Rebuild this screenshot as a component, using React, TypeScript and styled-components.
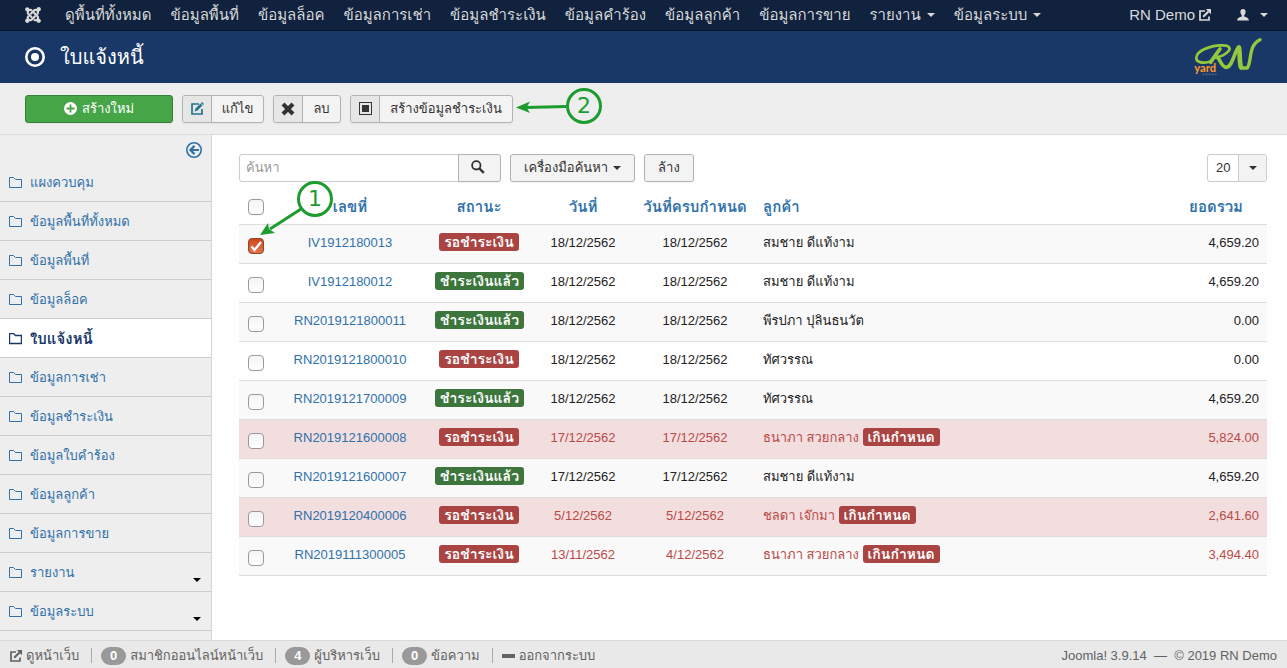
import React from 'react';
import styled, { createGlobalStyle, css } from 'styled-components';
import { FaJoomla } from 'react-icons/fa';

const GlobalStyle = createGlobalStyle`
  *, *::before, *::after { box-sizing: border-box; }
  html, body { margin: 0; padding: 0; }
  body {
    background: #fff;
    color: #333;
    font-family: "Liberation Sans", "Waree", "Loma", "Noto Sans Thai Looped", "Garuda", "Umpush", "Droid Sans Thai", "Noto Sans Thai", sans-serif;
    font-size: 13px;
    line-height: 18px;
  }
  a { color: #3071a9; text-decoration: none; }
  button, input, select { font: inherit; color: inherit; }
`;

const Page = styled.div`
  display: flex;
  flex-direction: column;
  height: 100vh;
  overflow: hidden;
  position: relative;
`;

const Navbar = styled.nav`
  display: flex;
  align-items: center;
  flex: none;
  height: 31px;
  padding: 0 19px 0 24px;
  background: #10223e;
  border-bottom: 1px solid #0b1629;
  color: #d9d9d9;
  font-size: 15px;
`;

const NavList = styled.div`
  display: flex;
  align-items: center;
  gap: 19px;
  flex: 1;
  margin-left: 23px;
`;

const NavLink = styled.a<{ $gap?: number }>`
  display: flex;
  align-items: center;
  gap: ${p => p.$gap || 6}px;
  color: #d9d9d9;
  white-space: nowrap;
`;

const NavEnd = styled.div`
  display: flex;
  align-items: center;
  gap: 26px;
`;

const Caret = styled.span`
  width: 0;
  height: 0;
  border: 4px solid transparent;
  border-top-color: currentColor;
  border-bottom: 0;
`;

const Header = styled.header`
  display: flex;
  align-items: center;
  flex: none;
  gap: 15px;
  height: 52px;
  padding: 0 25px;
  background: #1a3867;
  color: #fff;
`;

const Title = styled.h1`
  flex: 1;
  margin: 0;
  font-size: 20px;
  line-height: 32px;
  font-weight: 400;
`;

const Toolbar = styled.div`
  display: flex;
  align-items: center;
  flex: none;
  gap: 9px;
  height: 52px;
  padding: 0 25px;
  background: #eee;
  border-bottom: 1px solid #ddd;
`;

const buttonBase = css`
  display: inline-flex;
  align-items: center;
  justify-content: center;
  height: 28px;
  padding: 0;
  border: 1px solid #b3b3b3;
  border-radius: 3px;
  background: #f3f3f3;
  color: #333;
  white-space: nowrap;
  box-shadow: 0 1px 2px rgba(0, 0, 0, 0.05);
`;

const NewButton = styled.button`
  ${buttonBase}
  gap: 5px;
  width: 148px;
  background: #46a546;
  border-color: #378137;
  color: #fff;
`;

const ToolButton = styled.button<{ $width: number }>`
  ${buttonBase}
  width: ${p => p.$width}px;
  justify-content: flex-start;
`;

const ToolIcon = styled.span`
  display: flex;
  align-items: center;
  justify-content: center;
  flex: none;
  width: 29px;
  height: 26px;
  background: #e6e6e6;
  border-right: 1px solid #b3b3b3;
  border-radius: 3px 0 0 3px;
`;

const ToolLabel = styled.span`
  flex: 1;
  text-align: center;
`;

const Body = styled.div`
  display: flex;
  flex: 1;
  min-height: 0;
`;

const Sidebar = styled.aside`
  flex: none;
  width: 212px;
  overflow: hidden;
  background: #eee;
  border-right: 1px solid #d6d6d6;
`;

const CollapseRow = styled.div`
  display: flex;
  justify-content: flex-end;
  height: 28px;
  padding: 7px 9px 0;
`;

const CollapseButton = styled.button`
  display: flex;
  width: 16px;
  height: 16px;
  padding: 0;
  border: 0;
  background: none;
  color: #3071a9;
`;

const SideLink = styled.a<{ $active?: boolean }>`
  display: flex;
  align-items: center;
  gap: 8px;
  height: 39px;
  padding: 2px 10px 0 9px;
  border-bottom: 1px solid #ccc;
  background: ${p => (p.$active ? '#fff' : 'transparent')};
  color: ${p => (p.$active ? '#1a3867' : '#3071a9')};
  font-size: ${p => (p.$active ? 15 : 13)}px;
  font-weight: ${p => (p.$active ? 700 : 400)};
`;

const SideCaret = styled(Caret)`
  align-self: flex-end;
  margin: 0 0 9px auto;
  color: #000;
`;

const Content = styled.main`
  flex: 1;
  min-width: 0;
  padding: 18px 20px 0 27px;
  background: #fefefe;
`;

const FilterBar = styled.div`
  display: flex;
  align-items: center;
  gap: 9px;
  height: 29px;
`;

const SearchGroup = styled.div`
  display: flex;
`;

const SearchInput = styled.input`
  width: 220px;
  height: 28px;
  padding: 0 6px;
  border: 1px solid #ccc;
  border-radius: 3px 0 0 3px;
  background: #fff;
  &::placeholder { color: #999; opacity: 1; }
`;

const SearchButton = styled.button`
  ${buttonBase}
  width: 43px;
  margin-left: -1px;
  padding: 0 4px 2px 0;
  border-radius: 0 3px 3px 0;
`;

const FilterButton = styled.button`
  ${buttonBase}
  gap: 5px;
  padding: 0 13px;
`;

const LimitBox = styled.div`
  position: relative;
  display: flex;
  width: 60px;
  height: 28px;
  margin-left: auto;
  border: 1px solid #ccc;
  border-radius: 3px;
  background: #fff;
`;

const LimitSelect = styled.select`
  appearance: none;
  flex: 1;
  min-width: 0;
  padding: 0 0 0 8px;
  border: 0;
  background: none;
`;

const LimitArrow = styled.span`
  display: flex;
  align-items: center;
  justify-content: center;
  flex: none;
  width: 28px;
  border-left: 1px solid #ccc;
  border-radius: 0 3px 3px 0;
  background: #f3f3f3;
`;

const Table = styled.table`
  width: 100%;
  margin-top: 8px;
  border-collapse: collapse;
  table-layout: fixed;
`;

const Col = styled.col<{ $width?: number }>`
  width: ${p => (p.$width ? `${p.$width}px` : 'auto')};
`;

const Th = styled.th<{ $align?: string; $end?: boolean }>`
  height: 34px;
  padding: 0 ${p => (p.$end ? 24 : 8)}px 0 8px;
  text-align: ${p => p.$align || 'center'};
  font-size: 15px;
  font-weight: 700;
  white-space: nowrap;
`;

const Row = styled.tr<{ $tone: 'odd' | 'even' | 'late' }>`
  background: ${p => ({ odd: '#f9f9f9', even: '#fefefe', late: '#f2dede' })[p.$tone]};
  border-top: 1px solid #ddd;
  border-bottom: 1px solid #ddd;
`;

const Td = styled.td<{ $align?: string; $overdue?: boolean }>`
  height: 39px;
  padding: 8px;
  vertical-align: top;
  text-align: ${p => p.$align || 'center'};
  color: ${p => (p.$overdue ? '#b94a48' : '#222')};
  line-height: 20px;
  white-space: nowrap;
`;

const CheckTd = styled(Td)`
  padding: 12px 8px 0;
`;

const Check = styled.input`
  appearance: none;
  display: block;
  width: 16px;
  height: 16px;
  margin: 1px;
  border: 1px solid #999;
  border-radius: 4px;
  background: linear-gradient(#f4f4f4, #fff);
  &:checked {
    border-color: #8f4425;
    background:
      url("data:image/svg+xml,%3Csvg xmlns='http://www.w3.org/2000/svg' viewBox='0 0 14 14'%3E%3Cpath d='M2.5 7.5 5.5 11 12 3' fill='none' stroke='white' stroke-width='2.2'/%3E%3C/svg%3E"),
      linear-gradient(#cc4a1c, #e2764e);
  }
`;

const Badge = styled.span<{ $tone: 'green' | 'red' }>`
  display: inline-block;
  height: 18px;
  padding: 0 5px;
  border-radius: 3px;
  background: ${p => (p.$tone === 'green' ? '#3c763d' : '#a94442')};
  color: #fff;
  font-size: 14px;
  font-weight: 700;
  line-height: 18px;
  vertical-align: top;
`;

const Footer = styled.footer`
  display: flex;
  align-items: center;
  flex: none;
  height: 28px;
  padding: 2px 10px 0;
  background: #e9e9e9;
  border-top: 1px solid #d9d9d9;
  color: #626262;
`;

const FooterLink = styled.a`
  display: flex;
  align-items: center;
  gap: 4px;
  margin-right: 12px;
  color: #626262;
  white-space: nowrap;
  & + & {
    padding-left: 10px;
    background: linear-gradient(#aaa, #aaa) left center / 1px 15px no-repeat;
  }
`;

const Count = styled.span`
  width: 25px;
  height: 18px;
  border-radius: 9px;
  background: #999;
  color: #fff;
  font-weight: 700;
  text-align: center;
`;

const Copyright = styled.span`
  margin-left: auto;
  white-space: pre;
`;

const Marker = styled.div<{ $x: number; $y: number }>`
  position: absolute;
  left: ${p => p.$x}px;
  top: ${p => p.$y}px;
  display: flex;
  align-items: center;
  justify-content: center;
  width: 36px;
  height: 36px;
  border: 3px solid #1c9c2e;
  border-radius: 50%;
  color: #1c9c2e;
  font-family: "DejaVu Sans", sans-serif;
  font-size: 22px;
  line-height: 30px;
`;

const Arrow = styled.svg<{ $x: number; $y: number }>`
  position: absolute;
  left: ${p => p.$x}px;
  top: ${p => p.$y}px;
  pointer-events: none;
`;

const ExternalIcon = () => (
  <svg width="12" height="12" viewBox="0 0 12 12" fill="none" stroke="currentColor" strokeWidth="1.7">
    <path d="M6 2H1V11H10V7.5" />
    <path d="M4.2 7.8 9.5 2.5" strokeWidth="2" />
    <path d="M6.8 0H12V5.2Z" fill="currentColor" stroke="none" />
  </svg>
);

const UserIcon = () => (
  <svg width="12" height="12" viewBox="0 0 12 12" fill="currentColor">
    <path d="M6 0C7.8 0 8.6 1.2 8.6 2.8 8.6 4.3 8 5.6 7.2 6.2V7.6C9 8.2 11.8 9 11.8 11.4H.2C.2 9 3 8.2 4.8 7.6V6.2C4 5.6 3.4 4.3 3.4 2.8 3.4 1.2 4.2 0 6 0Z" />
  </svg>
);

const TargetIcon = () => (
  <svg width="20" height="20" viewBox="0 0 20 20">
    <circle cx="10" cy="10" r="8.7" fill="none" stroke="#fff" strokeWidth="2.6" />
    <circle cx="10" cy="10" r="4" fill="#fff" />
  </svg>
);

const Logo = () => (
  <svg width="68" height="40" viewBox="0 0 204 120" fill="none" stroke="#95c93d" strokeLinecap="round" strokeLinejoin="round">
    <path d="M46 74C26 80 5 76 7 61C9 42 46 26 82 25C106 24 112 34 102 44C92 54 76 60 64 61" strokeWidth="8" />
    <path d="M78 36C68 50 60 60 50 76" strokeWidth="11" />
    <path d="M70 61C80 68 82 92 98 91C116 87 120 46 134 30" strokeWidth="11" />
    <path d="M135 32C139 50 135 74 141 91" strokeWidth="14" />
    <path d="M142 93H160C174 74 162 24 198 8" strokeWidth="10" />
    <text x="1" y="105" fill="#f7942a" stroke="none" fontFamily="Lato, sans-serif" fontWeight="900" fontSize="33">yard</text>
    <path d="M28 112H70" stroke="#53627c" strokeWidth="5" strokeDasharray="2 7" />
  </svg>
);

const PlusIcon = () => (
  <svg width="13" height="13" viewBox="0 0 13 13">
    <circle cx="6.5" cy="6.5" r="6.5" fill="#fff" />
    <path d="M6.5 2.5V10.5M2.5 6.5H10.5" stroke="#46a546" strokeWidth="1.8" />
  </svg>
);

const EditIcon = () => (
  <svg width="13" height="13" viewBox="0 0 13 13" fill="none" stroke="#24748c" strokeWidth="1.7">
    <path d="M8 2H1V12H11V7" />
    <path d="M5 8 10.5 2.5" strokeWidth="2.6" />
    <path d="M3.6 9.4 4.2 6.9 6.1 8.8ZM10 1 11 0 13 2 12 3Z" fill="#24748c" stroke="none" />
  </svg>
);

const CrossIcon = () => (
  <svg width="14" height="14" viewBox="0 0 14 14" stroke="#333" strokeWidth="4">
    <path d="M2 2 12 12M12 2 2 12" />
  </svg>
);

const SquareIcon = () => (
  <svg width="13" height="13" viewBox="0 0 13 13">
    <rect x=".5" y=".5" width="12" height="12" fill="none" stroke="#333" />
    <rect x="3" y="3" width="7" height="7" fill="#333" />
  </svg>
);

const BackIcon = () => (
  <svg width="16" height="16" viewBox="0 0 16 16" fill="none" stroke="currentColor">
    <circle cx="8" cy="8" r="7.2" strokeWidth="1.6" />
    <path d="M4.2 8H13" strokeWidth="2" />
    <path d="M8.5 3.9 4.4 8 8.5 12.1" strokeWidth="2.2" />
  </svg>
);

const FolderIcon = ({ bold }: { bold?: boolean }) => (
  <svg width="13" height="12" viewBox="0 0 13 12" fill="none" stroke="currentColor" strokeWidth={bold ? 1.4 : 1}>
    <path d="M.5 10.5V.5H4.5L6.5 2.5H12.5V10.5Z" />
  </svg>
);

const SearchIcon = () => (
  <svg width="14" height="14" viewBox="0 0 14 14" fill="none" stroke="#333">
    <circle cx="5.3" cy="5.3" r="4.2" strokeWidth="1.8" />
    <path d="M8.3 8.3 12.8 12.8" strokeWidth="2.4" />
  </svg>
);

const DashIcon = () => (
  <svg width="13" height="4" viewBox="0 0 13 4"><rect width="13" height="4" fill="#626262" /></svg>
);

const navItems = ['ดูพื้นที่ทั้งหมด', 'ข้อมูลพื้นที่', 'ข้อมูลล็อค', 'ข้อมูลการเช่า', 'ข้อมูลชำระเงิน', 'ข้อมูลคำร้อง', 'ข้อมูลลูกค้า', 'ข้อมูลการขาย'];
const navMenus = ['รายงาน', 'ข้อมูลระบบ'];

const sideItems = [
  { label: 'แผงควบคุม' }, { label: 'ข้อมูลพื้นที่ทั้งหมด' }, { label: 'ข้อมูลพื้นที่' }, { label: 'ข้อมูลล็อค' },
  { label: 'ใบแจ้งหนี้', active: true }, { label: 'ข้อมูลการเช่า' }, { label: 'ข้อมูลชำระเงิน' },
  { label: 'ข้อมูลใบคำร้อง' }, { label: 'ข้อมูลลูกค้า' }, { label: 'ข้อมูลการขาย' },
  { label: 'รายงาน', menu: true }, { label: 'ข้อมูลระบบ', menu: true },
] as { label: string; active?: boolean; menu?: boolean }[];

interface Invoice {
  no: string;
  paid?: boolean;
  date: string;
  due: string;
  customer: string;
  total: string;
  overdue?: boolean;
  shaded?: boolean;
}

const invoices: Invoice[] = [
  { no: 'IV1912180013', date: '18/12/2562', due: '18/12/2562', customer: 'สมชาย ดีแท้งาม', total: '4,659.20' },
  { no: 'IV1912180012', paid: true, date: '18/12/2562', due: '18/12/2562', customer: 'สมชาย ดีแท้งาม', total: '4,659.20' },
  { no: 'RN2019121800011', paid: true, date: '18/12/2562', due: '18/12/2562', customer: 'พีรปภา ปุลินธนวัต', total: '0.00' },
  { no: 'RN2019121800010', date: '18/12/2562', due: '18/12/2562', customer: 'ทัศวรรณ', total: '0.00' },
  { no: 'RN2019121700009', paid: true, date: '18/12/2562', due: '18/12/2562', customer: 'ทัศวรรณ', total: '4,659.20' },
  { no: 'RN2019121600008', date: '17/12/2562', due: '17/12/2562', customer: 'ธนาภา สวยกลาง', total: '5,824.00', overdue: true, shaded: true },
  { no: 'RN2019121600007', paid: true, date: '17/12/2562', due: '17/12/2562', customer: 'สมชาย ดีแท้งาม', total: '4,659.20' },
  { no: 'RN2019120400006', date: '5/12/2562', due: '5/12/2562', customer: 'ชลดา เจ๊กมา', total: '2,641.60', overdue: true, shaded: true },
  { no: 'RN2019111300005', date: '13/11/2562', due: '4/12/2562', customer: 'ธนาภา สวยกลาง', total: '3,494.40', overdue: true },
];

export default function App() {
  return (
    <Page>
      <GlobalStyle />
      <Navbar>
        <FaJoomla size={18} />
        <NavList>
          {navItems.map(item => <NavLink href="#" key={item}>{item}</NavLink>)}
          {navMenus.map(item => <NavLink href="#" key={item}>{item}<Caret /></NavLink>)}
        </NavList>
        <NavEnd>
          <NavLink href="#" $gap={4}>RN Demo<ExternalIcon /></NavLink>
          <NavLink href="#" $gap={11} aria-label="User menu"><UserIcon /><Caret /></NavLink>
        </NavEnd>
      </Navbar>
      <Header>
        <TargetIcon />
        <Title>ใบแจ้งหนี้</Title>
        <Logo />
      </Header>
      <Toolbar>
        <NewButton><PlusIcon />สร้างใหม่</NewButton>
        <ToolButton $width={82}><ToolIcon><EditIcon /></ToolIcon><ToolLabel>แก้ไข</ToolLabel></ToolButton>
        <ToolButton $width={68}><ToolIcon><CrossIcon /></ToolIcon><ToolLabel>ลบ</ToolLabel></ToolButton>
        <ToolButton $width={163}><ToolIcon><SquareIcon /></ToolIcon><ToolLabel>สร้างข้อมูลชำระเงิน</ToolLabel></ToolButton>
      </Toolbar>
      <Body>
        <Sidebar>
          <CollapseRow><CollapseButton aria-label="Toggle sidebar"><BackIcon /></CollapseButton></CollapseRow>
          {sideItems.map(item => (
            <SideLink href="#" key={item.label} $active={item.active}>
              <FolderIcon bold={item.active} />
              {item.label}
              {item.menu && <SideCaret />}
            </SideLink>
          ))}
        </Sidebar>
        <Content>
          <FilterBar>
            <SearchGroup>
              <SearchInput type="text" placeholder="ค้นหา" aria-label="ค้นหา" />
              <SearchButton aria-label="Search"><SearchIcon /></SearchButton>
            </SearchGroup>
            <FilterButton>เครื่องมือค้นหา<Caret /></FilterButton>
            <FilterButton>ล้าง</FilterButton>
            <LimitBox>
              <LimitSelect aria-label="Rows per page" defaultValue="20"><option>20</option><option>50</option></LimitSelect>
              <LimitArrow><Caret /></LimitArrow>
            </LimitBox>
          </FilterBar>
          <Table>
            <colgroup>
              <Col $width={34} /><Col $width={154} /><Col $width={104} /><Col $width={104} /><Col $width={120} /><Col /><Col $width={120} />
            </colgroup>
            <thead>
              <tr>
                <Th><Check type="checkbox" aria-label="Select all" /></Th>
                <Th><a href="#">เลขที่</a></Th>
                <Th><a href="#">สถานะ</a></Th>
                <Th><a href="#">วันที่</a></Th>
                <Th><a href="#">วันที่ครบกำหนด</a></Th>
                <Th $align="left"><a href="#">ลูกค้า</a></Th>
                <Th $align="right" $end><a href="#">ยอดรวม</a></Th>
              </tr>
            </thead>
            <tbody>
              {invoices.map((inv, i) => (
                <Row key={inv.no} $tone={inv.shaded ? 'late' : i % 2 ? 'even' : 'odd'}>
                  <CheckTd><Check type="checkbox" defaultChecked={i === 0} aria-label={inv.no} /></CheckTd>
                  <Td><a href="#">{inv.no}</a></Td>
                  <Td><Badge $tone={inv.paid ? 'green' : 'red'}>{inv.paid ? 'ชำระเงินแล้ว' : 'รอชำระเงิน'}</Badge></Td>
                  <Td $overdue={inv.overdue}>{inv.date}</Td>
                  <Td $overdue={inv.overdue}>{inv.due}</Td>
                  <Td $align="left" $overdue={inv.overdue}>
                    {inv.customer} {inv.overdue && <Badge $tone="red">เกินกำหนด</Badge>}
                  </Td>
                  <Td $align="right" $overdue={inv.overdue}>{inv.total}</Td>
                </Row>
              ))}
            </tbody>
          </Table>
        </Content>
      </Body>
      <Footer>
        <FooterLink href="#"><ExternalIcon />ดูหน้าเว็บ</FooterLink>
        <FooterLink href="#"><Count>0</Count>สมาชิกออนไลน์หน้าเว็บ</FooterLink>
        <FooterLink href="#"><Count>4</Count>ผู้บริหารเว็บ</FooterLink>
        <FooterLink href="#"><Count>0</Count>ข้อความ</FooterLink>
        <FooterLink href="#"><DashIcon />ออกจากระบบ</FooterLink>
        <Copyright>{'Joomla! 3.9.14  —  © 2019 RN Demo'}</Copyright>
      </Footer>
      <Arrow $x={258} $y={204} width="46" height="34" viewBox="0 0 46 34">
        <path d="M43 5 12 25" stroke="#1c9c2e" strokeWidth="3" />
        <path d="M2 31 10 19 11 25 17 29Z" fill="#1c9c2e" />
      </Arrow>
      <Marker $x={297} $y={181}>1</Marker>
      <Arrow $x={515} $y={100} width="52" height="14" viewBox="0 0 52 14">
        <path d="M51 6.5 11 7.5" stroke="#1c9c2e" strokeWidth="3" />
        <path d="M1 7.5 15 1.5 11.5 7.5 15 13Z" fill="#1c9c2e" />
      </Arrow>
      <Marker $x={566} $y={88}>2</Marker>
    </Page>
  );
}
